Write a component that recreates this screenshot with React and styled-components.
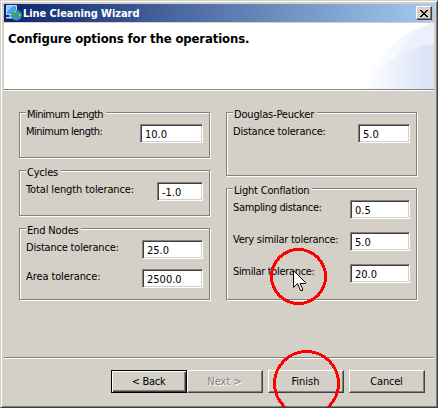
import React from "react";
import styled, { createGlobalStyle } from "styled-components";

const Global = createGlobalStyle`
  * { box-sizing: border-box; }
  html, body { margin: 0; padding: 0; overflow: hidden; background: #d4d0c8; }
`;

const face = "#d4d0c8";
const shadow = "#808080";
const dark = "#404040";

const Dialog = styled.div`
  position: relative;
  width: 438px;
  height: 408px;
  overflow: hidden;
  display: flex;
  flex-direction: column;
  padding: 3px 3px 2px 3px;
  background: ${face};
  border: 1px solid;
  border-color: ${face} ${dark} ${dark} ${face};
  box-shadow: inset 1px 1px #fff, inset -1px -1px ${shadow};
  color: #000;
  font: 11px/13px "DejaVu Sans Condensed", "DejaVu Sans", sans-serif;
  white-space: nowrap;
`;

const TitleBar = styled.header`
  display: flex;
  align-items: center;
  flex: none;
  width: 430px;
  height: 18px;
  padding: 0 2px;
  background: linear-gradient(90deg, #0a246a, #a6caf0);
  color: #fff;
`;

const Title = styled.span`
  flex: 1;
  margin-left: 1px;
  font-weight: bold;
  letter-spacing: -0.06px;
`;

const CloseButton = styled.button`
  display: flex;
  align-items: center;
  justify-content: center;
  width: 16px;
  height: 14px;
  padding: 0;
  background: ${face};
  border: 1px solid;
  border-color: #fff ${dark} ${dark} #fff;
  box-shadow: inset -1px -1px ${shadow};
`;

const Banner = styled.section`
  display: flex;
  justify-content: space-between;
  flex: none;
  width: 430px;
  height: 68px;
  margin-top: 1px;
  background: #fff;
  border-bottom: 1px solid #fff;
  box-shadow: inset 0 -1px ${shadow};
`;

const Heading = styled.h1`
  margin: 8px 0 0 4px;
  font-size: 13px;
  line-height: 15px;
  font-weight: bold;
  letter-spacing: -0.13px;
`;

const Content = styled.main`
  display: flex;
  flex: none;
  gap: 16px;
  height: 267px;
  padding: 21px 0 0 15px;
`;

const Column = styled.div`
  display: flex;
  flex-direction: column;
  gap: 12px;
  width: 191px;
`;

const Group = styled.section`
  display: flex;
  flex-direction: column;
  flex: none;
  height: ${(p) => p.$height}px;
  border: 1px solid ${shadow};
  box-shadow: 1px 1px #fff, inset 1px 1px #fff;
`;

const Legend = styled.h2`
  flex: none;
  width: ${(p) => p.$width}px;
  height: 13px;
  margin: -5px 0 3px 6px;
  padding-left: 1px;
  background: ${face};
  font-size: 11px;
  font-weight: normal;
  letter-spacing: ${(p) => p.$track}px;
`;

const Fields = styled.div`
  display: flex;
  flex-direction: column;
  gap: ${(p) => p.$gap}px;
  padding: 0 6px;
`;

const Row = styled.label`
  display: flex;
  justify-content: space-between;
  height: 19px;
`;

const Caption = styled.span`
  margin-top: 1px;
  letter-spacing: ${(p) => p.$track}px;
`;

const Input = styled.span`
  width: ${(p) => p.$width}px;
  height: 19px;
  padding: 2px 0 0 4px;
  background: #fff;
  border: 1px solid;
  border-color: ${shadow} #fff #fff ${shadow};
  box-shadow: inset 1px 1px ${dark}, inset -1px -1px ${face};
  line-height: 15px;
`;

const Footer = styled.footer`
  display: flex;
  flex: none;
  width: 430px;
  height: 36px;
  padding: 11px 9px 0 107px;
  border-top: 1px solid #fff;
  box-shadow: 0 -1px ${shadow};
`;

const Button = styled.button`
  display: flex;
  justify-content: center;
  width: 76px;
  height: 23px;
  margin: 0 0 0 ${(p) => p.$gap || 0}px;
  padding: ${(p) => (p.$focus ? 3 : 4)}px 1px 0 0;
  background: ${face};
  font: inherit;
  letter-spacing: ${(p) => p.$track || 0}px;
  border: 1px solid;
  border-color: ${(p) => (p.$focus ? "#000" : `#fff ${dark} ${dark} #fff`)};
  box-shadow: ${(p) =>
    p.$focus
      ? `inset 1px 1px #fff, inset -1px -1px ${dark}, inset -2px -2px ${shadow}`
      : `inset -1px -1px ${shadow}`};
  color: ${(p) => (p.$off ? shadow : "#000")};
  text-shadow: ${(p) => (p.$off ? "1px 1px #fff" : "none")};
  line-height: ${(p) => (p.$focus ? 15 : 13)}px;
`;

const Overlay = styled.svg`
  position: absolute;
  top: -1px;
  left: -1px;
  pointer-events: none;
`;

const AppIcon = () => (
  <svg width="16" height="16" viewBox="0 0 16 16">
    <path d="M0.5 0.5H10.5V9.5H0.5Z" fill="#4d9cf0" stroke="#b4dcff" />
    <path d="M1 1H7L1 7Z" fill="#8cc8ff" />
    <path d="M3 10H7V12H3Z" fill="#5aa0e8" />
    <path d="M0 12H7V13.500H0Z" fill="#c8e4ff" />
    <circle cx="10.500" cy="10.300" r="5.300" fill="#3f86e0" />
    <path d="M6 8L8 5.500L11 5L10.500 7L9 8L9.500 10L8 11L9 14L7 13L5.500 11Z" fill="#3fae49" />
    <path d="M12 6L15 8L15.500 11L13.500 14L12 12.500L11 10.500L12.500 9Z" fill="#35a040" />
    <path d="M8 7L10 6M13 9L14 11" stroke="#a8ec9a" />
  </svg>
);

const CloseIcon = () => (
  <svg width="8" height="7" viewBox="0 0 8 7" shapeRendering="crispEdges">
    <path
      d="M0 0h2v1h-2zM6 0h2v1h-2zM1 1h2v1h-2zM5 1h2v1h-2zM2 2h4v1h-4zM3 3h2v1h-2zM2 4h4v1h-4zM1 5h2v1h-2zM5 5h2v1h-2zM0 6h2v1h-2zM6 6h2v1h-2z"
      fill="#000"
    />
  </svg>
);

const Swoosh = () => (
  <svg width="74" height="66" viewBox="0 0 74 66">
    <defs>
      <linearGradient id="outer">
        <stop offset="0" stopColor="#fff" />
        <stop offset="1" stopColor="#edf1fc" />
      </linearGradient>
      <linearGradient id="inner">
        <stop offset="0" stopColor="#fff" />
        <stop offset="0.45" stopColor="#edf2fc" />
        <stop offset="0.85" stopColor="#dee5f7" />
        <stop offset="1" stopColor="#dbe3f7" />
      </linearGradient>
    </defs>
    <path d="M2 66C13 38 36 8 74 0V66Z" fill="url(#outer)" />
    <path d="M32 42C43 22 55 7 74 0V66H32Z" fill="#e8eefb" opacity="0.6" />
    <path d="M2 66C22 39 45 24 74 21V66Z" fill="url(#inner)" />
  </svg>
);

const left = [
  { name: "Minimum Length", track: -0.5, width: 80, height: 46, rows: [["Minimum length:", -0.5, "10.0", 63]] },
  { name: "Cycles", track: -0.2, width: 35, height: 46, rows: [["Total length tolerance:", -0.12, "-1.0", 46]] },
  {
    name: "End Nodes", track: -0.15, width: 55, height: 72, gap: 10,
    rows: [["Distance tolerance:", -0.2, "25.0", 61], ["Area tolerance:", -0.1, "2500.0", 61]],
  },
];

const right = [
  { name: "Douglas-Peucker", track: -0.17, width: 84, height: 64, rows: [["Distance tolerance:", -0.2, "5.0", 52]] },
  {
    name: "Light Conflation", track: -0.18, width: 79, height: 112, gap: 13,
    rows: [
      ["Sampling distance:", -0.34, "0.5", 60],
      ["Very similar tolerance:", -0.26, "5.0", 60],
      ["Similar tolerance:", -0.33, "20.0", 60],
    ],
  },
];

const OptionGroup = ({ group }) => (
  <Group $height={group.height}>
    <Legend $width={group.width} $track={group.track}>{group.name}</Legend>
    <Fields $gap={group.gap || 0}>
      {group.rows.map(([label, track, value, width]) => (
        <Row key={label}>
          <Caption $track={track}>{label}</Caption>
          <Input $width={width}>{value}</Input>
        </Row>
      ))}
    </Fields>
  </Group>
);

export default function App() {
  return (
    <>
      <Global />
      <Dialog>
        <TitleBar>
          <AppIcon />
          <Title>Line Cleaning Wizard</Title>
          <CloseButton aria-label="Close"><CloseIcon /></CloseButton>
        </TitleBar>
        <Banner>
          <Heading>Configure options for the operations.</Heading>
          <Swoosh />
        </Banner>
        <Content>
          <Column>{left.map((g) => <OptionGroup key={g.name} group={g} />)}</Column>
          <Column>{right.map((g) => <OptionGroup key={g.name} group={g} />)}</Column>
        </Content>
        <Footer>
          <Button $focus $track={-0.3}>&lt; Back</Button>
          <Button $off>Next &gt;</Button>
          <Button $gap={5}>Finish</Button>
          <Button $gap={5} $track={-0.2}>Cancel</Button>
        </Footer>
        <Overlay width="438" height="408" viewBox="0 0 438 408">
          <g fill="none" stroke="#f00" strokeWidth="3" shapeRendering="crispEdges">
            <circle cx="298.500" cy="276.500" r="27" />
            <circle cx="306.500" cy="383.500" r="32" />
          </g>
          <path
            d="M293.500 270.500V287.500L297.500 283.500L300.500 290.500H302.500V288.500L300 283.500H305.500V282.500Z"
            fill="#fff"
            stroke="#000"
          />
        </Overlay>
      </Dialog>
    </>
  );
}
